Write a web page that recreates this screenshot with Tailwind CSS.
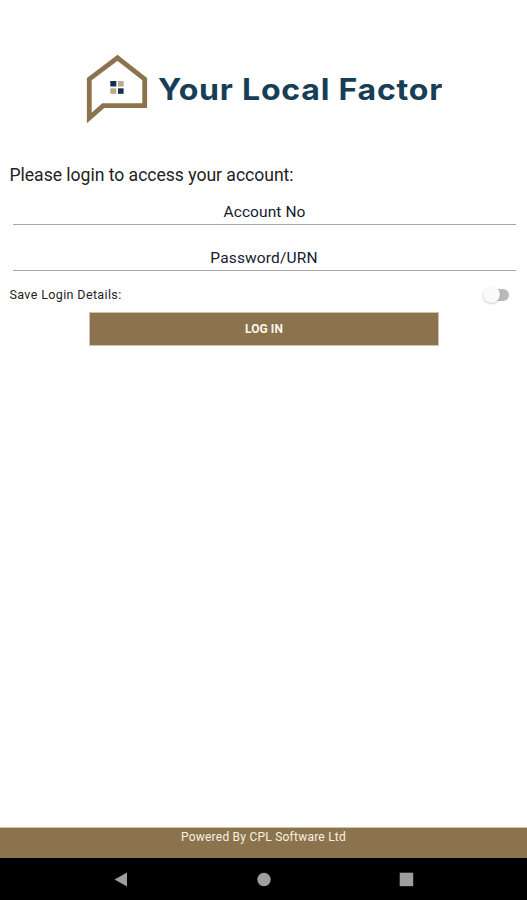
<!DOCTYPE html>
<html lang="en">
<head>
<meta charset="utf-8">
<title>Your Local Factor</title>
<script src="https://cdn.jsdelivr.net/npm/@tailwindcss/browser@4"></script>
</head>
<body class="h-screen overflow-hidden bg-white font-['Roboto',sans-serif] text-[#222]">
<div class="flex h-full flex-col">
  <header class="h-[163px] shrink-0">
    <svg class="block" width="527" height="163" viewBox="0 0 527 163" role="img" aria-label="Your Local Factor">
      <path d="M89.3 118V79.2L117.5 57.9L144.7 79.2V105.6H103.2Z" fill="none" stroke="#8b744d" stroke-width="4.8" stroke-miterlimit="6"/>
      <rect x="110.3" y="81" width="6" height="5.5" fill="#12304f"/>
      <rect x="118" y="81" width="5.6" height="5.5" fill="#b9aa90"/>
      <rect x="110.3" y="88.3" width="6" height="5.5" fill="#b9aa90"/>
      <rect x="118" y="88.3" width="5.6" height="5.5" fill="#12304f"/>
      <text x="158" y="100.3" textLength="285" lengthAdjust="spacingAndGlyphs" class="fill-[#173e57] font-['Inter',sans-serif] text-[29.5px] font-bold tracking-[0.7px]">Your Local Factor</text>
    </svg>
  </header>
  <main class="flex grow flex-col">
    <h1 class="h-6 pl-[9.5px] text-[17.6px] leading-6 tracking-[-0.03px]">Please login to access your account:</h1>
    <div class="mr-[11px] ml-[13px] mt-[13px] h-[25px] border-b border-[#a5a5a5] text-center text-[15.5px] leading-6 tracking-[0.08px] text-[#14202e]">Account No</div>
    <div class="mr-[11px] ml-[13px] mt-[21px] h-[25px] border-b border-[#a5a5a5] pr-px text-center text-[15.5px] leading-6 tracking-[0.15px] text-[#14202e]">Password/URN</div>
    <div class="mt-3 flex h-6 items-center justify-between pr-[18px] pl-[9.5px]">
      <span class="text-[12.5px] tracking-[0.37px]">Save Login Details:</span>
      <span class="flex h-3 w-[26px] items-center rounded-full bg-[#b9b9b9]">
        <span class="-mt-px size-[17px] shrink-0 rounded-full bg-[#fafafa] shadow-[0_1px_2px_rgba(0,0,0,0.22)]"></span>
      </span>
    </div>
    <button class="mt-[5px] ml-[89px] h-[34px] w-[350px] border border-[#cfc3ad] bg-[#8b744d] text-[12px] font-bold tracking-[0.1px] text-[#fbf6ec]">LOG IN</button>
  </main>
  <footer class="shrink-0">
    <div class="h-[31px] border-t border-[#cfc3ad] bg-[#8b744d] text-center text-[12px] leading-[18px] tracking-[0.23px] text-[#f8f0e2]">Powered By CPL Software Ltd</div>
    <nav class="h-[42px] bg-black">
      <svg class="block" width="527" height="42" fill="#9e9e9e">
        <path d="M114.5 21.5L127 14.5V28.5Z"/>
        <circle cx="264" cy="21.5" r="6.7"/>
        <rect x="399.7" y="14.7" width="13.5" height="13.5"/>
      </svg>
    </nav>
  </footer>
</div>
</body>
</html>
